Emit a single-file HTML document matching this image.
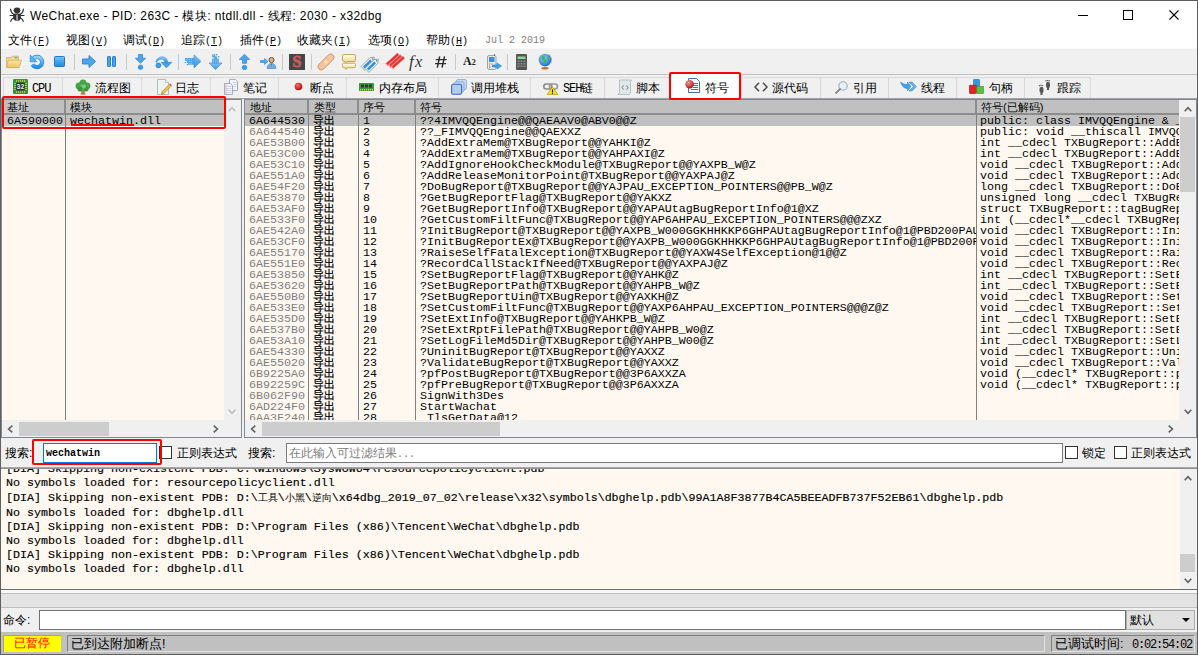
<!DOCTYPE html>
<html><head><meta charset="utf-8"><title>x32dbg</title>
<style>
*{margin:0;padding:0;box-sizing:border-box}
html,body{width:1198px;height:655px;overflow:hidden;background:#f0f0f0}
body{font-family:"Liberation Sans",sans-serif;font-size:12px;color:#000}
#win{position:absolute;left:0;top:0;width:1198px;height:655px;overflow:hidden;background:#f0f0f0}
.a{position:absolute}
.bx{position:absolute;box-sizing:border-box}
#rows{position:absolute;left:0;top:115px;width:1179px;height:305px;overflow:hidden}
.row{position:absolute;left:245px;width:934px;height:11px;white-space:nowrap}
.row.sel{background:#c0c0c0}
.row .c{position:absolute;top:1px;font-family:"Liberation Mono",monospace;font-size:11.667px;line-height:11px;color:#000}
.row .addr{color:#808080}
.row.sel .addr{color:#000}
.row .cj{font-family:"Liberation Sans",sans-serif;font-size:11px;top:0px;-webkit-text-stroke:0.25px #000}
.row .sym{width:556px;overflow:hidden}
.row .dec{width:199px;overflow:hidden}
#logtext{position:absolute;left:2px;top:469px;width:1177px;height:119px;overflow:hidden}
.logl{position:absolute;left:4px;font-family:"Liberation Mono",monospace;font-size:11.667px;line-height:14px;white-space:nowrap;-webkit-text-stroke:0.15px #000;}
.menu{position:absolute;top:33px;font-size:12px;line-height:14px;white-space:nowrap}
.tab{position:absolute;top:77px;height:21px;border:1px solid #d9d9d9;border-bottom:none;background:#f0f0f0}
.tabt{position:absolute;top:81px;font-size:12px;line-height:14px;white-space:nowrap}
.sep{position:absolute;top:54px;width:1px;height:16px;background:#c8c8c8}
.hdr{position:absolute;top:100px;height:15px;background:#c0c0c0;border-bottom:2px solid #8c8c8c;border-right:2px solid #8c8c8c}
.hdrt{position:absolute;top:101px;font-size:11px;line-height:13px;white-space:nowrap}
.lcj{font-family:'Liberation Sans',sans-serif;font-size:10px;-webkit-text-stroke:0;letter-spacing:0}
.mm{font-family:'Liberation Mono',monospace;font-size:10px}

</style></head><body>
<div id="win">
<!-- window frame -->
<div class="bx" style="left:0;top:0;width:1198px;height:49px;background:#fff"></div>
<div class="bx" style="left:0;top:48px;width:1198px;height:1px;background:#f8f8f8"></div>
<div class="bx" style="left:0;top:74px;width:1198px;height:1px;background:#c2c2c2"></div>
<!-- title -->
<div class="a" style="left:30px;top:9px;font-size:12px;line-height:14px;white-space:nowrap;letter-spacing:0.4px">WeChat.exe - PID: 263C - 模块: ntdll.dll - 线程: 2030 - x32dbg</div>
<!-- window buttons -->
<div class="bx" style="left:1078px;top:15px;width:10px;height:1px;background:#000"></div>
<div class="bx" style="left:1123px;top:10px;width:10px;height:10px;border:1px solid #000"></div>
<svg class="a" style="left:1169px;top:10px" width="10" height="10"><path d="M0.5 0.5L9.5 9.5M9.5 0.5L0.5 9.5" stroke="#000" stroke-width="1.1"/></svg>
<!-- menu -->
<div class="menu" style="left:8px">文件<span class="mm">(<u>F</u>)</span></div>
<div class="menu" style="left:66px">视图<span class="mm">(<u>V</u>)</span></div>
<div class="menu" style="left:123px">调试<span class="mm">(<u>D</u>)</span></div>
<div class="menu" style="left:181px">追踪<span class="mm">(<u>T</u>)</span></div>
<div class="menu" style="left:240px">插件<span class="mm">(<u>P</u>)</span></div>
<div class="menu" style="left:297px">收藏夹<span class="mm">(<u>I</u>)</span></div>
<div class="menu" style="left:368px">选项<span class="mm">(<u>O</u>)</span></div>
<div class="menu" style="left:426px">帮助<span class="mm">(<u>H</u>)</span></div>
<div class="menu" style="left:485px;top:34px;color:#808080;font-family:'Liberation Mono',monospace;font-size:10px">Jul 2 2019</div>
<!-- toolbar separators -->
<div class="sep" style="left:74px"></div>
<div class="sep" style="left:126px"></div>
<div class="sep" style="left:178px"></div>
<div class="sep" style="left:230px"></div>
<div class="sep" style="left:282px"></div>
<div class="sep" style="left:311px"></div>
<div class="sep" style="left:455px"></div>
<div class="sep" style="left:507px"></div>
<!-- tabs -->
<div class="tab" style="left:3px;width:60px"></div>
<div class="tab" style="left:62px;width:80px"></div>
<div class="tab" style="left:141px;width:70px"></div>
<div class="tab" style="left:210px;width:69px"></div>
<div class="tab" style="left:278px;width:69px"></div>
<div class="tab" style="left:346px;width:93px"></div>
<div class="tab" style="left:438px;width:93px"></div>
<div class="tab" style="left:530px;width:75px"></div>
<div class="tab" style="left:604px;width:66px"></div>
<div class="tab" style="left:741px;width:80px"></div>
<div class="tab" style="left:820px;width:69px"></div>
<div class="tab" style="left:888px;width:69px"></div>
<div class="tab" style="left:956px;width:69px"></div>
<div class="tab" style="left:1024px;width:67px"></div>
<div class="bx" style="left:671px;top:74px;width:69px;height:25px;background:#fff"></div>
<div class="bx" style="left:0;top:98px;width:1198px;height:1px;background:#a0a0a0"></div>
<div class="tabt" style="left:32px;top:82px;font-family:'Liberation Mono',monospace;font-size:12px;letter-spacing:-1.1px">CPU</div>
<div class="tabt" style="left:95px">流程图</div>
<div class="tabt" style="left:175px">日志</div>
<div class="tabt" style="left:243px">笔记</div>
<div class="tabt" style="left:310px">断点</div>
<div class="tabt" style="left:379px">内存布局</div>
<div class="tabt" style="left:471px">调用堆栈</div>
<div class="tabt" style="left:563px"><span style="font-family:'Liberation Mono',monospace;font-size:12px;letter-spacing:-1.1px">SEH</span>链</div>
<div class="tabt" style="left:636px">脚本</div>
<div class="tabt" style="left:705px">符号</div>
<div class="tabt" style="left:772px">源代码</div>
<div class="tabt" style="left:853px">引用</div>
<div class="tabt" style="left:921px">线程</div>
<div class="tabt" style="left:989px">句柄</div>
<div class="tabt" style="left:1057px">跟踪</div>

<!-- left panel -->
<div class="bx" style="left:1px;top:99px;width:241px;height:339px;border:1px solid #828790;background:#f0f0f0"></div>
<div class="bx" style="left:2px;top:100px;width:1px;height:320px;background:#fffff8"></div>
<div class="bx" style="left:3px;top:100px;width:221px;height:320px;background:#fff8f0"></div>
<div class="hdr" style="left:3px;width:63px"></div>
<div class="hdr" style="left:66px;width:158px;border-right:none"></div>
<div class="hdrt" style="left:7px">基址</div>
<div class="hdrt" style="left:70px">模块</div>
<div class="bx" style="left:3px;top:115px;width:221px;height:11px;background:#c0c0c0"></div>
<div class="bx" style="left:65px;top:114px;width:1px;height:306px;background:#808080;z-index:1"></div>
<div class="a" style="left:7px;top:116px;font-family:'Liberation Mono',monospace;font-size:11.667px;line-height:11px">6A590000</div>
<div class="a" style="left:70px;top:116px;font-family:'Liberation Mono',monospace;font-size:11.667px;line-height:11px">wechatwin.dll</div>
<div class="bx" style="left:71px;top:124px;width:63px;height:2px;background:#ff0000;z-index:1"></div>
<!-- right panel -->
<div class="bx" style="left:244px;top:99px;width:953px;height:339px;border:1px solid #828790;background:#f0f0f0"></div>
<div class="bx" style="left:245px;top:100px;width:934px;height:320px;background:#fff8f0"></div>
<div class="hdr" style="left:245px;width:64px"></div>
<div class="hdr" style="left:309px;width:50px"></div>
<div class="hdr" style="left:359px;width:57px"></div>
<div class="hdr" style="left:416px;width:561px"></div>
<div class="hdr" style="left:977px;width:202px;border-right:none"></div>
<div class="hdrt" style="left:250px">地址</div>
<div class="hdrt" style="left:314px">类型</div>
<div class="hdrt" style="left:363px">序号</div>
<div class="hdrt" style="left:420px">符号</div>
<div class="hdrt" style="left:981px">符号(已解码)</div>
<div class="bx" style="left:308px;top:114px;width:1px;height:306px;background:#808080;z-index:1"></div>
<div class="bx" style="left:358px;top:114px;width:1px;height:306px;background:#808080;z-index:1"></div>
<div class="bx" style="left:415px;top:114px;width:1px;height:306px;background:#808080;z-index:1"></div>
<div class="bx" style="left:976px;top:114px;width:1px;height:306px;background:#808080;z-index:1"></div>
<!-- right vscroll thumb -->
<div class="bx" style="left:1180px;top:117px;width:15px;height:75px;background:#cdcdcd"></div>
<!-- h scroll thumbs -->
<div class="bx" style="left:19px;top:422px;width:90px;height:14px;background:#cdcdcd"></div>
<div class="bx" style="left:262px;top:422px;width:238px;height:14px;background:#cdcdcd"></div>

<!-- search bar -->
<div class="bx" style="left:0;top:438px;width:1198px;height:29px;background:#f0f0f0"></div>
<div class="a" style="left:5px;top:446px;font-size:12px;line-height:14px">搜索:</div>
<div class="bx" style="left:43px;top:443px;width:114px;height:20px;border:1px solid #0078d7;background:#fff"></div>
<div class="a" style="left:46px;top:448px;font-family:'Liberation Mono',monospace;font-size:10px;line-height:12px;font-weight:bold">wechatwin</div>
<div class="bx" style="left:159px;top:446px;width:13px;height:13px;border:1px solid #333;background:#fff"></div>
<div class="a" style="left:177px;top:446px;font-size:12px;line-height:14px">正则表达式</div>
<div class="a" style="left:248px;top:446px;font-size:12px;line-height:14px">搜索:</div>
<div class="bx" style="left:286px;top:443px;width:777px;height:20px;border:1px solid #7a7a7a;background:#fff"></div>
<div class="a" style="left:289px;top:446px;font-size:12px;line-height:14px;color:#7c7c7c">在此输入可过滤结果<span style="font-family:'Liberation Mono',monospace;font-size:10px">...</span></div>
<div class="bx" style="left:1065px;top:446px;width:13px;height:13px;border:1px solid #333;background:#fff"></div>
<div class="a" style="left:1082px;top:446px;font-size:12px;line-height:14px">锁定</div>
<div class="bx" style="left:1114px;top:446px;width:13px;height:13px;border:1px solid #333;background:#fff"></div>
<div class="a" style="left:1131px;top:446px;font-size:12px;line-height:14px">正则表达式</div>

<!-- log -->
<div class="bx" style="left:0;top:467px;width:1198px;height:1px;background:#a8a8a8"></div>
<div class="bx" style="left:0;top:468px;width:1198px;height:1px;background:#909090"></div>
<div class="bx" style="left:1px;top:469px;width:1179px;height:120px;background:#fff8f0"></div>
<div class="bx" style="left:1180px;top:469px;width:16px;height:120px;background:#f0f0f0"></div>
<div class="bx" style="left:1180px;top:554px;width:15px;height:18px;background:#cdcdcd"></div>
<div class="bx" style="left:0;top:589px;width:1198px;height:1px;background:#6c6c6c"></div>
<div class="bx" style="left:0;top:590px;width:1198px;height:3px;background:#f8f8f8"></div>
<div class="bx" style="left:0;top:593px;width:1198px;height:1px;background:#c0c0c0"></div>
<div class="bx" style="left:0;top:594px;width:1198px;height:13px;background:#e3e3e3"></div>
<div class="bx" style="left:0;top:607px;width:1198px;height:1px;background:#c0c0c0"></div>
<!-- command bar -->
<div class="bx" style="left:0;top:608px;width:1198px;height:24px;background:#f0f0f0"></div>
<div class="a" style="left:3px;top:613px;font-size:12px;line-height:14px">命令:</div>
<div class="bx" style="left:39px;top:610px;width:1087px;height:20px;border:1px solid #707070;background:#fff"></div>
<div class="bx" style="left:1126px;top:610px;width:69px;height:20px;border:1px solid #adadad;background:#e1e1e1"></div>
<div class="a" style="left:1130px;top:613px;font-size:12px;line-height:14px">默认</div>
<svg class="a" style="left:1182px;top:618px" width="8" height="4"><path d="M0 0H8L4 4Z" fill="#000"/></svg>
<!-- status bar -->
<div class="bx" style="left:0;top:632px;width:1198px;height:23px;background:#c0c0c0"></div>
<div class="bx" style="left:3px;top:635px;width:58px;height:17px;background:#ffff00;border-top:1px solid #a8a860;border-left:1px solid #a8a860"></div>
<div class="a" style="left:14px;top:636px;font-size:12px;line-height:14px;color:#ff0000">已暂停</div>
<div class="bx" style="left:67px;top:635px;width:978px;height:17px;border-top:1px solid #808080;border-left:1px solid #808080;border-bottom:1px solid #e0e0e0;border-right:1px solid #e0e0e0"></div>
<div class="a" style="left:71px;top:637px;font-size:12.5px;line-height:14px">已到达附加断点!</div>
<div class="bx" style="left:1051px;top:635px;width:144px;height:17px;border-top:1px solid #808080;border-left:1px solid #808080;border-bottom:1px solid #e0e0e0;border-right:1px solid #e0e0e0"></div>
<div class="a" style="left:1055px;top:637px;font-size:12.5px;line-height:14px">已调试时间:</div>
<div class="a" style="left:1132px;top:638px;font-family:'Liberation Mono',monospace;font-size:12px;line-height:14px;letter-spacing:-1.2px">0:02:54:02</div>

<!-- red highlight boxes -->
<div class="bx" style="left:2px;top:96px;width:224px;height:33px;border:2px solid #ff0000;border-radius:2px;z-index:2"></div>
<div class="bx" style="left:32px;top:439px;width:130px;height:26px;border:2px solid #ff0000;border-radius:2px;z-index:2"></div>
<div class="bx" style="left:669px;top:72px;width:72px;height:28px;border:2px solid #ff0000;border-radius:2px;z-index:2"></div>

<!-- window border -->
<div class="bx" style="left:0;top:0;width:1198px;height:655px;border:1px solid #5f5f5f;z-index:3"></div>

<!-- bug icon -->
<svg class="a" style="left:9px;top:7px" width="16" height="15" viewBox="0 0 16 15">
<g stroke="#333" stroke-width="1.2" fill="none" stroke-linecap="round">
<path d="M1 8.5H15"/><path d="M1.6 2.2Q2 6 4.6 7.2"/><path d="M14.4 2.2Q14 6 11.4 7.2"/>
<path d="M4.6 11Q2.2 12 1.7 14.3"/><path d="M11.4 11Q13.8 12 14.3 14.3"/></g>
<ellipse cx="8" cy="3.3" rx="3.4" ry="2.9" fill="#333"/>
<path d="M4.2 7Q8 5.6 11.8 7L12 11Q11 14 8 14Q5 14 4 11Z" fill="#333"/>
<rect x="7.2" y="7.6" width="1.7" height="6" fill="#aaa"/>
</svg>
<!-- toolbar icons -->
<svg class="a" style="left:6px;top:55px" width="16" height="14" viewBox="0 0 16 14">
<defs><linearGradient id="gf" x1="0" y1="0" x2="0" y2="1"><stop offset="0" stop-color="#fbe7a6"/><stop offset="1" stop-color="#e8c46a"/></linearGradient></defs>
<path d="M0.5 2.5H5.5L6.5 1.2H12.5V12.5H0.5Z" fill="#f2d68a" stroke="#d4b060" stroke-width="0.8"/>
<rect x="8.5" y="2" width="3" height="1.2" fill="#4ab0d8"/>
<path d="M2.2 5.2H15.5L13.2 12.6H0.6Z" fill="url(#gf)" stroke="#d4b060" stroke-width="0.8"/>
</svg>
<svg class="a" style="left:30px;top:55px;overflow:visible" width="14" height="14" viewBox="0 0 14 14">
<defs><linearGradient id="grs" x1="0" y1="0" x2="0" y2="1"><stop offset="0" stop-color="#8ed2fb"/><stop offset="1" stop-color="#1e90ea"/></linearGradient></defs>
<path d="M3.2 3.6A5.1 5.1 0 1 1 2.6 9.6" fill="none" stroke="#2f84d6" stroke-width="4.2"/>
<path d="M3.2 3.6A5.1 5.1 0 1 1 2.6 9.6" fill="none" stroke="url(#grs)" stroke-width="3"/>
<path d="M0.2 0L0.2 6.8L6.8 6.8Z" fill="#5ab4f4" stroke="#2f84d6" stroke-width="0.7"/>
</svg>
<svg class="a" style="left:54px;top:56px" width="11" height="11" viewBox="0 0 11 11">
<defs><linearGradient id="gs" x1="0" y1="0" x2="0" y2="1"><stop offset="0" stop-color="#79c6fa"/><stop offset="0.5" stop-color="#3fa5ef"/><stop offset="1" stop-color="#1d8ee8"/></linearGradient></defs>
<rect x="0.5" y="0.5" width="10" height="10" rx="0.8" fill="url(#gs)" stroke="#2a74c4"/>
</svg>
<svg class="a" style="left:82px;top:55px" width="14" height="13" viewBox="0 0 14 13">
<path d="M0.5 4H7V0.5L13.5 6.5L7 12.5V9H0.5Z" fill="#4aa7ee" stroke="#2f7fcf" stroke-width="0.9"/>
</svg>
<svg class="a" style="left:107px;top:56px" width="9" height="11" viewBox="0 0 9 11">
<rect x="0.5" y="0.5" width="3" height="10" rx="0.6" fill="#3fa5ef" stroke="#2a74c4" stroke-width="0.9"/>
<rect x="5.5" y="0.5" width="3" height="10" rx="0.6" fill="#3fa5ef" stroke="#2a74c4" stroke-width="0.9"/>
</svg>
<svg class="a" style="left:135px;top:54px" width="11" height="16" viewBox="0 0 11 16">
<path d="M3.5 0.3H7.5V4.2H10.7L5.5 9.3L0.3 4.2H3.5Z" fill="#49a6ee" stroke="#2f7fcf" stroke-width="0.7"/>
<circle cx="5.5" cy="13.2" r="2.3" fill="#33a0f0" stroke="#2f7fcf" stroke-width="0.6"/>
</svg>
<svg class="a" style="left:155px;top:56px;overflow:visible" width="17" height="13" viewBox="0 0 17 13">
<path d="M0.8 6C1.5 2.5 4.5 0.6 7.5 0.8C10.8 1 12.6 3.5 12.8 6.6L9.8 6.6C9.5 4.5 8.5 3.2 6.8 3.2C4.5 3.2 2.5 4.5 1.6 6.2Z" fill="url(#grs)" stroke="#3a8ad8" stroke-width="0.5"/>
<path d="M6.2 6.4L16.8 6.4L11.4 11.8Z" fill="#3ea6f0" stroke="#2f7fcf" stroke-width="0.7"/>
<circle cx="3.4" cy="9.4" r="2.4" fill="#33a2f2" stroke="#2a78c8" stroke-width="0.8"/>
</svg>
<svg class="a" style="left:184px;top:54px" width="17" height="15" viewBox="0 0 17 15">
<defs><linearGradient id="gt" x1="0" y1="0" x2="0" y2="1"><stop offset="0" stop-color="#7ccaf8"/><stop offset="1" stop-color="#2a90e4"/></linearGradient></defs>
<path d="M10 0.9L10 13.8L16.9 7.4Z" fill="url(#gt)" stroke="#3a80d0" stroke-width="0.6"/>
<rect x="4" y="4" width="6.4" height="6.7" fill="#4aa4ec"/>
<rect x="1" y="4" width="2.8" height="2.8" fill="#4aa4ec"/><rect x="2.8" y="6.3" width="2.5" height="2.5" fill="#4aa4ec"/>
<g fill="#8fd0ff"><circle cx="5.3" cy="5.2" r="0.6"/><circle cx="7.3" cy="5.2" r="0.6"/><circle cx="5.3" cy="7.4" r="0.6"/><circle cx="7.3" cy="7.4" r="0.6"/><circle cx="5.3" cy="9.4" r="0.6"/><circle cx="7.3" cy="9.4" r="0.6"/><circle cx="2.3" cy="5.3" r="0.6"/></g>
<circle cx="1.4" cy="8.6" r="0.7" fill="#3a88d8"/><circle cx="3.4" cy="10.6" r="0.7" fill="#3a88d8"/>
</svg>
<svg class="a" style="left:208px;top:54px" width="15" height="16" viewBox="0 0 15 16">
<path d="M1 9L14 9L7.5 15.6Z" fill="url(#gt)" stroke="#3a80d0" stroke-width="0.6"/>
<rect x="4.2" y="4.5" width="6.6" height="4.8" fill="#4aa4ec"/>
<rect x="4.2" y="0.3" width="3" height="3" fill="#4aa4ec"/><rect x="6.3" y="2.3" width="2.6" height="2.6" fill="#4aa4ec"/>
<g fill="#8fd0ff"><circle cx="5.6" cy="5.8" r="0.6"/><circle cx="7.6" cy="5.8" r="0.6"/><circle cx="9.6" cy="5.8" r="0.6"/><circle cx="5.6" cy="7.8" r="0.6"/><circle cx="7.6" cy="7.8" r="0.6"/><circle cx="9.6" cy="7.8" r="0.6"/><circle cx="5.6" cy="1.7" r="0.6"/></g>
<circle cx="8.7" cy="0.7" r="0.7" fill="#3a88d8"/><circle cx="10.7" cy="2.7" r="0.7" fill="#3a88d8"/>
</svg>
<svg class="a" style="left:239px;top:54px" width="11" height="16" viewBox="0 0 11 16">
<path d="M3.5 9.3H7.5V5.4H10.7L5.5 0.3L0.3 5.4H3.5Z" fill="#49a6ee" stroke="#2f7fcf" stroke-width="0.7"/>
<circle cx="5.5" cy="13.5" r="2.3" fill="#33a0f0" stroke="#2f7fcf" stroke-width="0.6"/>
</svg>
<svg class="a" style="left:260px;top:57px" width="17" height="12" viewBox="0 0 17 12">
<path d="M0.5 3.5H4.5V1.5L8 4.5L4.5 7.5V5.5H0.5Z" fill="#4aa7ee" stroke="#2f7fcf" stroke-width="0.6"/>
<circle cx="11.5" cy="3" r="2.6" fill="#d9b08a" stroke="#5a3a20" stroke-width="0.8"/>
<path d="M7 11.5Q7.5 6.5 11.5 6.5Q15.5 6.5 16 11.5Z" fill="#6ab0e8" stroke="#3a7cc0" stroke-width="0.6"/>
<path d="M11 6.6L11.5 10L12 6.6Z" fill="#a06030"/>
</svg>
<div class="bx" style="left:289px;top:54px;width:16px;height:16px;background:#454545"></div>
<div class="a" style="left:289px;top:54px;width:16px;text-align:center;font-family:'Liberation Serif',serif;font-weight:bold;font-size:16px;line-height:16px;color:#c65c5c;-webkit-text-stroke:0.8px #c65c5c">S</div>
<svg class="a" style="left:318px;top:54px;overflow:visible" width="16" height="16" viewBox="0 0 16 16">
<g transform="rotate(-45 8 8)"><rect x="-1.9" y="4.7" width="19.8" height="6.6" rx="3.3" fill="#f2c4a0" stroke="#cf9168" stroke-width="0.9"/><rect x="6.2" y="6.1" width="3.6" height="3.8" fill="#f9dba6"/></g>
</svg>
<svg class="a" style="left:342px;top:54px" width="14" height="16" viewBox="0 0 14 16">
<defs><linearGradient id="gc" x1="0" y1="0" x2="0" y2="1"><stop offset="0" stop-color="#fffbe8"/><stop offset="0.45" stop-color="#f4f0c0"/><stop offset="1" stop-color="#e2d880"/></linearGradient></defs>
<path d="M1.8 0.5H12.2Q13.5 0.5 13.5 1.8V6.2Q13.5 7.5 12.2 7.5H5L4 8.8L3.4 7.5H1.8Q0.5 7.5 0.5 6.2V1.8Q0.5 0.5 1.8 0.5Z" fill="url(#gc)" stroke="#c49a58" stroke-width="0.9"/>
<path d="M1.8 9.2H12.2Q13.5 9.2 13.5 10.5V12.4Q13.5 13.7 12.2 13.7H5L4 15.5L3.4 13.7H1.8Q0.5 13.7 0.5 12.4V10.5Q0.5 9.2 1.8 9.2Z" fill="url(#gc)" stroke="#c49a58" stroke-width="0.9"/>
</svg>
<svg class="a" style="left:363px;top:54px;overflow:visible" width="18" height="16" viewBox="0 0 18 16">
<g transform="rotate(-45 7 8)"><path d="M-2.5 4.9H10L13.5 7.6L10 10.3H-2.5Z" fill="#f8f8f8" stroke="#7c9ca2" stroke-width="0.8"/><rect x="-1.4" y="6.3" width="10.4" height="2.6" fill="#2a8fe0"/><circle cx="11" cy="7.6" r="0.8" fill="#6a8a90"/></g>
<g transform="translate(4 2) rotate(-45 7 8)"><path d="M-2.5 4.9H10L13.5 7.6L10 10.3H-2.5Z" fill="#f8f8f8" stroke="#7c9ca2" stroke-width="0.8"/><rect x="-1.4" y="6.3" width="10.4" height="2.6" fill="#2a8fe0"/><circle cx="11" cy="7.6" r="0.8" fill="#6a8a90"/></g>
</svg>
<svg class="a" style="left:387px;top:54px;overflow:visible" width="17" height="15" viewBox="0 0 17 15">
<g transform="rotate(-42 8 7.5)" stroke="#f6a0a0" stroke-width="0.5"><path d="M-1 2.8H15.5V5.6H-1L0.4 4.2Z" fill="#e23434"/><path d="M0 5.8H16.5V8.6H0L1.4 7.2Z" fill="#e83c3c"/><path d="M1 8.8H17.5V11.6H1L2.4 10.2Z" fill="#e23434"/></g>
</svg>
<div class="a" style="left:409px;top:53px;font-family:'Liberation Serif',serif;font-style:italic;font-size:17px;line-height:18px;color:#333">f</div><div class="a" style="left:415px;top:53px;font-family:'Liberation Serif',serif;font-style:italic;font-size:16px;line-height:18px;color:#333">x</div>
<svg class="a" style="left:435px;top:56px" width="12" height="12" viewBox="0 0 12 12"><g stroke="#303030" stroke-linecap="round"><path d="M4.6 0.9L2.4 11.1M9.4 0.9L7.2 11.1" stroke-width="1.5"/><path d="M1.2 3.6H11.2M0.6 7.6H10.6" stroke-width="1.3"/></g></svg>
<div class="a" style="left:463px;top:55px;font-family:'Liberation Serif',serif;font-weight:bold;font-size:12px;line-height:13px;color:#202020">A<span style="font-size:8px">2</span></div>
<svg class="a" style="left:487px;top:54px" width="15" height="16" viewBox="0 0 15 16">
<rect x="0.5" y="1.5" width="8.5" height="14" rx="1.5" fill="#e8e8e8" stroke="#909090" stroke-width="0.8"/>
<rect x="2" y="3" width="5.5" height="5" fill="#3c8fd8"/>
<line x1="7.5" y1="0" x2="7.5" y2="2" stroke="#707070"/>
<g fill="#909090"><rect x="2" y="9.5" width="1.4" height="1"/><rect x="4.2" y="9.5" width="1.4" height="1"/><rect x="2" y="11.5" width="1.4" height="1"/><rect x="2" y="13.2" width="1.4" height="1"/></g>
<path d="M5.5 11H10V9L14.5 12L10 15V13H5.5Z" fill="#3aa6ee" stroke="#2a7cc8" stroke-width="0.6"/>
</svg>
<svg class="a" style="left:516px;top:54px" width="11" height="16" viewBox="0 0 11 16">
<rect x="0" y="0" width="11" height="16" rx="1" fill="#555"/>
<rect x="1.5" y="2.5" width="8" height="2.5" fill="#8fd88f"/>
<g fill="#8c8c8c"><rect x="1.5" y="6.5" width="2" height="1.5"/><rect x="4.5" y="6.5" width="2" height="1.5"/><rect x="7.5" y="6.5" width="2" height="1.5"/><rect x="1.5" y="9" width="2" height="1.5"/><rect x="4.5" y="9" width="2" height="1.5"/><rect x="7.5" y="9" width="2" height="1.5"/><rect x="1.5" y="11.5" width="2" height="1.5"/><rect x="4.5" y="11.5" width="2" height="1.5"/><rect x="7.5" y="11.5" width="2" height="1.5"/></g>
</svg>
<svg class="a" style="left:538px;top:53px" width="15" height="17" viewBox="0 0 15 17">
<defs><radialGradient id="gg" cx="0.4" cy="0.35" r="0.7"><stop offset="0" stop-color="#8fd0ff"/><stop offset="1" stop-color="#1a6ac8"/></radialGradient></defs>
<path d="M11 1Q15 5 13 10.5" fill="none" stroke="#b0b0b0" stroke-width="0.9"/>
<circle cx="7" cy="7" r="6.3" fill="url(#gg)"/>
<path d="M4 3Q6 2 7 4Q6 6 8 7Q9 9 7.5 10.5Q6 9 5 7Q3 6 4 3Z" fill="#3cba4a"/>
<path d="M9.5 3.5Q11.5 4 12 6Q10.5 6.5 9.5 5Z" fill="#3cba4a"/>
<ellipse cx="7" cy="15.2" rx="3.6" ry="1.3" fill="#c0703a"/>
<line x1="7" y1="13.3" x2="7" y2="14.2" stroke="#999"/>
</svg>
<!-- tab icons -->
<svg class="a" style="left:13px;top:79px" width="15" height="15" viewBox="0 0 15 15">
<rect x="0" y="0" width="15" height="15" rx="1.2" fill="#3e8e3e"/>
<g fill="#e6c84a"><rect x="3" y="1.2" width="1" height="1.6"/><rect x="5" y="1.2" width="1" height="1.6"/><rect x="7" y="1.2" width="1" height="1.6"/><rect x="9" y="1.2" width="1" height="1.6"/><rect x="11" y="1.2" width="1" height="1.6"/>
<rect x="3" y="12.2" width="1" height="1.6"/><rect x="5" y="12.2" width="1" height="1.6"/><rect x="7" y="12.2" width="1" height="1.6"/><rect x="9" y="12.2" width="1" height="1.6"/><rect x="11" y="12.2" width="1" height="1.6"/>
<rect x="1.2" y="4" width="1.6" height="1"/><rect x="1.2" y="6" width="1.6" height="1"/><rect x="1.2" y="8" width="1.6" height="1"/><rect x="1.2" y="10" width="1.6" height="1"/>
<rect x="12.2" y="4" width="1.6" height="1"/><rect x="12.2" y="6" width="1.6" height="1"/><rect x="12.2" y="8" width="1.6" height="1"/><rect x="12.2" y="10" width="1.6" height="1"/></g>
<rect x="3.2" y="3.4" width="8.6" height="8.2" rx="0.8" fill="#333"/>
<text x="7.5" y="10" text-anchor="middle" font-family="Liberation Mono" font-weight="bold" font-size="6.5" fill="#e8e8e8">32</text>
</svg>
<svg class="a" style="left:75px;top:79px" width="16" height="16" viewBox="0 0 16 16">
<path d="M6.5 10.5L6 15H10L9.5 10.5Z" fill="#b87a40"/>
<ellipse cx="8" cy="15" rx="3" ry="0.8" fill="#c08050"/>
<circle cx="8" cy="4" r="3.6" fill="#4aa24a"/><circle cx="4" cy="7" r="3.4" fill="#48a048"/><circle cx="12" cy="7" r="3.4" fill="#48a048"/><circle cx="8" cy="8.5" r="3.6" fill="#5cb85c"/><circle cx="5" cy="10" r="2.5" fill="#3e963e"/><circle cx="11" cy="10" r="2.5" fill="#3e963e"/>
<circle cx="9" cy="7.5" r="2" fill="#78c878"/>
</svg>
<svg class="a" style="left:157px;top:79px" width="15" height="16" viewBox="0 0 15 16">
<path d="M0.5 0.5H8.5L11.5 3.5V15.5H0.5Z" fill="#eef4f4" stroke="#a8b4b4" stroke-width="0.9"/>
<path d="M8.5 0.5V3.5H11.5" fill="#fff" stroke="#a8b4b4" stroke-width="0.8"/>
<path d="M4.5 15.3L5.2 12.5L12.4 5.3L14.2 7.1L7 14.3Z" fill="#f0c840" stroke="#8a7020" stroke-width="0.6"/>
<path d="M12.4 5.3L13.3 4.4L15 6.2L14.2 7.1Z" fill="#e05050"/>
</svg>
<svg class="a" style="left:224px;top:79px" width="14" height="16" viewBox="0 0 14 16">
<path d="M5.5 0.5H11.5L13.5 2.5V11.5H5.5Z" fill="#f4f6ff" stroke="#909aa8" stroke-width="0.8"/>
<path d="M0.5 4.5H6.5L8.5 6.5V15.5H0.5Z" fill="#f4f6ff" stroke="#909aa8" stroke-width="0.8"/>
<g stroke="#a8b8e8" stroke-width="0.6"><line x1="1.5" y1="7.5" x2="7.5" y2="7.5"/><line x1="1.5" y1="9.5" x2="7.5" y2="9.5"/><line x1="1.5" y1="11.5" x2="7.5" y2="11.5"/><line x1="1.5" y1="13.5" x2="7.5" y2="13.5"/><line x1="8.5" y1="3.5" x2="12.5" y2="3.5"/><line x1="9.5" y1="5.5" x2="12.5" y2="5.5"/><line x1="9.5" y1="7.5" x2="12.5" y2="7.5"/></g>
<line x1="2" y1="5" x2="2" y2="15" stroke="#f08080" stroke-width="0.5"/>
</svg>
<svg class="a" style="left:294px;top:82px" width="9" height="9" viewBox="0 0 9 9">
<defs><radialGradient id="gr" cx="0.4" cy="0.35" r="0.65"><stop offset="0" stop-color="#ff7070"/><stop offset="1" stop-color="#b00808"/></radialGradient></defs>
<circle cx="4.5" cy="4.5" r="3.8" fill="url(#gr)"/>
</svg>
<svg class="a" style="left:359px;top:83px" width="15" height="8" viewBox="0 0 15 8">
<rect x="0" y="0" width="15" height="8" rx="0.6" fill="#3a9a3a"/>
<rect x="2" y="1.5" width="3" height="3" fill="#333"/><rect x="6" y="1.5" width="3" height="3" fill="#333"/><rect x="10" y="1.5" width="3" height="3" fill="#333"/>
<g fill="#e8d050"><rect x="1" y="6" width="1" height="1.5"/><rect x="3" y="6" width="1" height="1.5"/><rect x="5" y="6" width="1" height="1.5"/><rect x="7" y="6" width="1" height="1.5"/><rect x="9" y="6" width="1" height="1.5"/><rect x="11" y="6" width="1" height="1.5"/><rect x="13" y="6" width="1" height="1.5"/></g>
</svg>
<svg class="a" style="left:451px;top:79px" width="16" height="16" viewBox="0 0 16 16">
<rect x="5.5" y="0.5" width="10" height="10" rx="1.5" fill="#c8dcf4" stroke="#88a8d8" stroke-width="0.8"/>
<rect x="3" y="2.8" width="10" height="10" rx="1.5" fill="#c0d6f2" stroke="#7a9cd6" stroke-width="0.8"/>
<rect x="0.6" y="5.2" width="10" height="10" rx="1.5" fill="#b4ccee" stroke="#3a6ad0" stroke-width="1.1"/>
</svg>
<svg class="a" style="left:543px;top:83px" width="16" height="12" viewBox="0 0 16 12">
<rect x="0.8" y="1" width="8" height="5" rx="2.5" fill="none" stroke="#8a8a8a" stroke-width="1.6"/>
<rect x="6.5" y="1" width="8" height="5" rx="2.5" fill="none" stroke="#9a9a9a" stroke-width="1.6"/>
<path d="M9.5 4L15 11.5H4Z" fill="#f4d820" stroke="#b09000" stroke-width="0.6"/>
<rect x="9" y="6.5" width="1" height="3" fill="#222"/><rect x="9" y="10" width="1" height="1" fill="#222"/>
</svg>
<svg class="a" style="left:617px;top:79px" width="16" height="16" viewBox="0 0 16 16">
<path d="M2.5 1H14.5Q13.5 2 13.5 3.5V13.5Q13.5 15 12 15.5H0.8Q2.5 14.5 2.5 13Z" fill="#dde9e9" stroke="#a8b8b8" stroke-width="0.8"/>
<path d="M6.5 6.5L5 8.5L6.5 10.5M9.5 6.5L11 8.5L9.5 10.5" fill="none" stroke="#666" stroke-width="0.9"/>
</svg>
<svg class="a" style="left:685px;top:78px" width="15" height="15" viewBox="0 0 15 15">
<defs><radialGradient id="gr2" cx="0.38" cy="0.32" r="0.7"><stop offset="0" stop-color="#ff9a9a"/><stop offset="1" stop-color="#b81010"/></radialGradient></defs>
<path d="M3.5 0.5H11.5L14.5 3.5V14.5H3.5Z" fill="#f4f8ff" stroke="#3c5aa0" stroke-width="0.9"/>
<g stroke="#3060d0" stroke-width="0.9"><line x1="8" y1="5.5" x2="13" y2="5.5"/><line x1="8" y1="7.5" x2="13" y2="7.5"/><line x1="8" y1="9.5" x2="13" y2="9.5"/><line x1="6" y1="11.5" x2="13" y2="11.5"/></g>
<circle cx="4.6" cy="6.2" r="4.2" fill="url(#gr2)"/>
</svg>
<svg class="a" style="left:754px;top:82px" width="14" height="10" viewBox="0 0 14 10">
<path d="M5 0.7L1 5L5 9.3M9 0.7L13 5L9 9.3" fill="none" stroke="#4a4a4a" stroke-width="1.5"/>
</svg>
<svg class="a" style="left:835px;top:81px" width="13" height="13" viewBox="0 0 13 13">
<circle cx="8" cy="5" r="4.2" fill="#e6f0f8" stroke="#9aaab8" stroke-width="1.1"/>
<line x1="5" y1="8" x2="1" y2="12" stroke="#888" stroke-width="1.8" stroke-linecap="round"/>
</svg>
<svg class="a" style="left:900px;top:81px" width="17" height="11" viewBox="0 0 17 11">
<path d="M0.5 1Q4 4 7.5 3.5V1L11 5.5L7.5 10V7.5Q3 8 0.5 1Z" fill="#3aa2ee" stroke="#2a7cc8" stroke-width="0.5"/>
<path d="M9 1L12 1L16.5 5.5L12 10H9L13.5 5.5Z" fill="#5ab4f4" stroke="#2a7cc8" stroke-width="0.5"/>
</svg>
<svg class="a" style="left:969px;top:79px" width="15" height="15" viewBox="0 0 15 15">
<rect x="4.5" y="0.3" width="6" height="7" rx="0.8" fill="#2e9ae6" stroke="#1a6ab0" stroke-width="0.6"/>
<rect x="0.3" y="6.3" width="7.2" height="8.2" rx="0.8" fill="#e02424" stroke="#a01010" stroke-width="0.6"/>
<rect x="7.7" y="7.3" width="7" height="7.2" rx="0.8" fill="#5cc040" stroke="#3a8a20" stroke-width="0.6"/>
</svg>
<svg class="a" style="left:1038px;top:80px" width="14" height="15" viewBox="0 0 14 15">
<ellipse cx="3.5" cy="10" rx="2" ry="3.2" fill="#555"/><ellipse cx="10" cy="5" rx="2" ry="3.2" fill="#555"/>
<g fill="#555"><circle cx="1.5" cy="5.7" r="0.7"/><circle cx="3" cy="5.2" r="0.7"/><circle cx="4.6" cy="5.6" r="0.7"/><circle cx="8" cy="0.8" r="0.7"/><circle cx="9.6" cy="0.4" r="0.7"/><circle cx="11.2" cy="0.8" r="0.7"/></g>
<rect x="2.5" y="13" width="2" height="2" fill="#555"/><rect x="9" y="8" width="2" height="2" fill="#555"/>
</svg>
<!-- scrollbar arrows -->
<svg class="a" style="left:1184px;top:106px" width="8" height="6" viewBox="0 0 8 6"><path d="M0.7 5.3L4 1.6L7.3 5.3" fill="none" stroke="#606060" stroke-width="1.6"/></svg>
<svg class="a" style="left:1184px;top:409px" width="8" height="6" viewBox="0 0 8 6"><path d="M0.7 0.7L4 4.4L7.3 0.7" fill="none" stroke="#606060" stroke-width="1.6"/></svg>
<svg class="a" style="left:228px;top:106px" width="8" height="6" viewBox="0 0 8 6"><path d="M0.7 5.3L4 1.6L7.3 5.3" fill="none" stroke="#c0c0c0" stroke-width="1.6"/></svg>
<svg class="a" style="left:228px;top:409px" width="8" height="6" viewBox="0 0 8 6"><path d="M0.7 0.7L4 4.4L7.3 0.7" fill="none" stroke="#c0c0c0" stroke-width="1.6"/></svg>
<svg class="a" style="left:7px;top:425px" width="6" height="8" viewBox="0 0 6 8"><path d="M5.3 0.7L1.6 4L5.3 7.3" fill="none" stroke="#606060" stroke-width="1.6"/></svg>
<svg class="a" style="left:213px;top:425px" width="6" height="8" viewBox="0 0 6 8"><path d="M0.7 0.7L4.4 4L0.7 7.3" fill="none" stroke="#606060" stroke-width="1.6"/></svg>
<svg class="a" style="left:250px;top:425px" width="6" height="8" viewBox="0 0 6 8"><path d="M5.3 0.7L1.6 4L5.3 7.3" fill="none" stroke="#606060" stroke-width="1.6"/></svg>
<svg class="a" style="left:1168px;top:425px" width="6" height="8" viewBox="0 0 6 8"><path d="M0.7 0.7L4.4 4L0.7 7.3" fill="none" stroke="#606060" stroke-width="1.6"/></svg>
<svg class="a" style="left:1184px;top:475px" width="8" height="6" viewBox="0 0 8 6"><path d="M0.7 5.3L4 1.6L7.3 5.3" fill="none" stroke="#606060" stroke-width="1.6"/></svg>
<svg class="a" style="left:1184px;top:578px" width="8" height="6" viewBox="0 0 8 6"><path d="M0.7 0.7L4 4.4L7.3 0.7" fill="none" stroke="#606060" stroke-width="1.6"/></svg>

<div id="rows">
<div class="row sel" style="top:0px"><span class="c addr" style="left:4px">6A644530</span><span class="c cj" style="left:68px">导出</span><span class="c" style="left:118px">1</span><span class="c sym" style="left:175px">??4IMVQQEngine@@QAEAAV0@ABV0@@Z</span><span class="c dec" style="left:735px">public: class IMVQQEngine &amp; __thiscall IMVQQEngine::operator=(class IMVQQEngine const &amp;)</span></div>
<div class="row" style="top:11px"><span class="c addr" style="left:4px">6A644540</span><span class="c cj" style="left:68px">导出</span><span class="c" style="left:118px">2</span><span class="c sym" style="left:175px">??_FIMVQQEngine@@QAEXXZ</span><span class="c dec" style="left:735px">public: void __thiscall IMVQQEngine::`default constructor closure'(void)</span></div>
<div class="row" style="top:22px"><span class="c addr" style="left:4px">6AE53B00</span><span class="c cj" style="left:68px">导出</span><span class="c" style="left:118px">3</span><span class="c sym" style="left:175px">?AddExtraMem@TXBugReport@@YAHKI@Z</span><span class="c dec" style="left:735px">int __cdecl TXBugReport::AddExtraMem(unsigned long,unsigned int)</span></div>
<div class="row" style="top:33px"><span class="c addr" style="left:4px">6AE53C00</span><span class="c cj" style="left:68px">导出</span><span class="c" style="left:118px">4</span><span class="c sym" style="left:175px">?AddExtraMem@TXBugReport@@YAHPAXI@Z</span><span class="c dec" style="left:735px">int __cdecl TXBugReport::AddExtraMem(void *,unsigned int)</span></div>
<div class="row" style="top:44px"><span class="c addr" style="left:4px">6AE53C10</span><span class="c cj" style="left:68px">导出</span><span class="c" style="left:118px">5</span><span class="c sym" style="left:175px">?AddIgnoreHookCheckModule@TXBugReport@@YAXPB_W@Z</span><span class="c dec" style="left:735px">void __cdecl TXBugReport::AddIgnoreHookCheckModule(wchar_t const *)</span></div>
<div class="row" style="top:55px"><span class="c addr" style="left:4px">6AE551A0</span><span class="c cj" style="left:68px">导出</span><span class="c" style="left:118px">6</span><span class="c sym" style="left:175px">?AddReleaseMonitorPoint@TXBugReport@@YAXPAJ@Z</span><span class="c dec" style="left:735px">void __cdecl TXBugReport::AddReleaseMonitorPoint(long *)</span></div>
<div class="row" style="top:66px"><span class="c addr" style="left:4px">6AE54F20</span><span class="c cj" style="left:68px">导出</span><span class="c" style="left:118px">7</span><span class="c sym" style="left:175px">?DoBugReport@TXBugReport@@YAJPAU_EXCEPTION_POINTERS@@PB_W@Z</span><span class="c dec" style="left:735px">long __cdecl TXBugReport::DoBugReport(struct _EXCEPTION_POINTERS *,wchar_t const *)</span></div>
<div class="row" style="top:77px"><span class="c addr" style="left:4px">6AE53870</span><span class="c cj" style="left:68px">导出</span><span class="c" style="left:118px">8</span><span class="c sym" style="left:175px">?GetBugReportFlag@TXBugReport@@YAKXZ</span><span class="c dec" style="left:735px">unsigned long __cdecl TXBugReport::GetBugReportFlag(void)</span></div>
<div class="row" style="top:88px"><span class="c addr" style="left:4px">6AE53AF0</span><span class="c cj" style="left:68px">导出</span><span class="c" style="left:118px">9</span><span class="c sym" style="left:175px">?GetBugReportInfo@TXBugReport@@YAPAUtagBugReportInfo@1@XZ</span><span class="c dec" style="left:735px">struct TXBugReport::tagBugReportInfo * __cdecl TXBugReport::GetBugReportInfo(void)</span></div>
<div class="row" style="top:99px"><span class="c addr" style="left:4px">6AE533F0</span><span class="c cj" style="left:68px">导出</span><span class="c" style="left:118px">10</span><span class="c sym" style="left:175px">?GetCustomFiltFunc@TXBugReport@@YAP6AHPAU_EXCEPTION_POINTERS@@@ZXZ</span><span class="c dec" style="left:735px">int (__cdecl*__cdecl TXBugReport::GetCustomFiltFunc(void))(struct _EXCEPTION_POINTERS *)</span></div>
<div class="row" style="top:110px"><span class="c addr" style="left:4px">6AE542A0</span><span class="c cj" style="left:68px">导出</span><span class="c" style="left:118px">11</span><span class="c sym" style="left:175px">?InitBugReport@TXBugReport@@YAXPB_W000GGKHHKKP6GHPAUtagBugReportInfo@1@PBD200PAU_EXCEPTION_POINTERS@@@ZH@Z</span><span class="c dec" style="left:735px">void __cdecl TXBugReport::InitBugReport(wchar_t const *)</span></div>
<div class="row" style="top:121px"><span class="c addr" style="left:4px">6AE53CF0</span><span class="c cj" style="left:68px">导出</span><span class="c" style="left:118px">12</span><span class="c sym" style="left:175px">?InitBugReportEx@TXBugReport@@YAXPB_W000GGKHHKKP6GHPAUtagBugReportInfo@1@PBD200PAU_EXCEPTION_POINTERS@@@ZH@Z</span><span class="c dec" style="left:735px">void __cdecl TXBugReport::InitBugReportEx(wchar_t const *)</span></div>
<div class="row" style="top:132px"><span class="c addr" style="left:4px">6AE55170</span><span class="c cj" style="left:68px">导出</span><span class="c" style="left:118px">13</span><span class="c sym" style="left:175px">?RaiseSelfFatalException@TXBugReport@@YAXW4SelfException@1@@Z</span><span class="c dec" style="left:735px">void __cdecl TXBugReport::RaiseSelfFatalException(enum TXBugReport::SelfException)</span></div>
<div class="row" style="top:143px"><span class="c addr" style="left:4px">6AE551E0</span><span class="c cj" style="left:68px">导出</span><span class="c" style="left:118px">14</span><span class="c sym" style="left:175px">?RecordCallStackIfNeed@TXBugReport@@YAXPAJ@Z</span><span class="c dec" style="left:735px">void __cdecl TXBugReport::RecordCallStackIfNeed(long *)</span></div>
<div class="row" style="top:154px"><span class="c addr" style="left:4px">6AE53850</span><span class="c cj" style="left:68px">导出</span><span class="c" style="left:118px">15</span><span class="c sym" style="left:175px">?SetBugReportFlag@TXBugReport@@YAHK@Z</span><span class="c dec" style="left:735px">int __cdecl TXBugReport::SetBugReportFlag(unsigned long)</span></div>
<div class="row" style="top:165px"><span class="c addr" style="left:4px">6AE53620</span><span class="c cj" style="left:68px">导出</span><span class="c" style="left:118px">16</span><span class="c sym" style="left:175px">?SetBugReportPath@TXBugReport@@YAHPB_W@Z</span><span class="c dec" style="left:735px">int __cdecl TXBugReport::SetBugReportPath(wchar_t const *)</span></div>
<div class="row" style="top:176px"><span class="c addr" style="left:4px">6AE550B0</span><span class="c cj" style="left:68px">导出</span><span class="c" style="left:118px">17</span><span class="c sym" style="left:175px">?SetBugReportUin@TXBugReport@@YAXKH@Z</span><span class="c dec" style="left:735px">void __cdecl TXBugReport::SetBugReportUin(unsigned long,int)</span></div>
<div class="row" style="top:187px"><span class="c addr" style="left:4px">6AE533E0</span><span class="c cj" style="left:68px">导出</span><span class="c" style="left:118px">18</span><span class="c sym" style="left:175px">?SetCustomFiltFunc@TXBugReport@@YAXP6AHPAU_EXCEPTION_POINTERS@@@Z@Z</span><span class="c dec" style="left:735px">void __cdecl TXBugReport::SetCustomFiltFunc(int (__cdecl*)(struct _EXCEPTION_POINTERS *))</span></div>
<div class="row" style="top:198px"><span class="c addr" style="left:4px">6AE535D0</span><span class="c cj" style="left:68px">导出</span><span class="c" style="left:118px">19</span><span class="c sym" style="left:175px">?SetExtInfo@TXBugReport@@YAHKPB_W@Z</span><span class="c dec" style="left:735px">int __cdecl TXBugReport::SetExtInfo(unsigned long,wchar_t const *)</span></div>
<div class="row" style="top:209px"><span class="c addr" style="left:4px">6AE537B0</span><span class="c cj" style="left:68px">导出</span><span class="c" style="left:118px">20</span><span class="c sym" style="left:175px">?SetExtRptFilePath@TXBugReport@@YAHPB_W0@Z</span><span class="c dec" style="left:735px">int __cdecl TXBugReport::SetExtRptFilePath(wchar_t const *,wchar_t const *)</span></div>
<div class="row" style="top:220px"><span class="c addr" style="left:4px">6AE53A10</span><span class="c cj" style="left:68px">导出</span><span class="c" style="left:118px">21</span><span class="c sym" style="left:175px">?SetLogFileMd5Dir@TXBugReport@@YAHPB_W00@Z</span><span class="c dec" style="left:735px">int __cdecl TXBugReport::SetLogFileMd5Dir(wchar_t const *)</span></div>
<div class="row" style="top:231px"><span class="c addr" style="left:4px">6AE54330</span><span class="c cj" style="left:68px">导出</span><span class="c" style="left:118px">22</span><span class="c sym" style="left:175px">?UninitBugReport@TXBugReport@@YAXXZ</span><span class="c dec" style="left:735px">void __cdecl TXBugReport::UninitBugReport(void)</span></div>
<div class="row" style="top:242px"><span class="c addr" style="left:4px">6AE55020</span><span class="c cj" style="left:68px">导出</span><span class="c" style="left:118px">23</span><span class="c sym" style="left:175px">?ValidateBugReport@TXBugReport@@YAXXZ</span><span class="c dec" style="left:735px">void __cdecl TXBugReport::ValidateBugReport(void)</span></div>
<div class="row" style="top:253px"><span class="c addr" style="left:4px">6B9225A0</span><span class="c cj" style="left:68px">导出</span><span class="c" style="left:118px">24</span><span class="c sym" style="left:175px">?pfPostBugReport@TXBugReport@@3P6AXXZA</span><span class="c dec" style="left:735px">void (__cdecl* TXBugReport::pfPostBugReport)(void)</span></div>
<div class="row" style="top:264px"><span class="c addr" style="left:4px">6B92259C</span><span class="c cj" style="left:68px">导出</span><span class="c" style="left:118px">25</span><span class="c sym" style="left:175px">?pfPreBugReport@TXBugReport@@3P6AXXZA</span><span class="c dec" style="left:735px">void (__cdecl* TXBugReport::pfPreBugReport)(void)</span></div>
<div class="row" style="top:275px"><span class="c addr" style="left:4px">6B062F90</span><span class="c cj" style="left:68px">导出</span><span class="c" style="left:118px">26</span><span class="c sym" style="left:175px">SignWith3Des</span><span class="c dec" style="left:735px"></span></div>
<div class="row" style="top:286px"><span class="c addr" style="left:4px">6AD224F0</span><span class="c cj" style="left:68px">导出</span><span class="c" style="left:118px">27</span><span class="c sym" style="left:175px">StartWachat</span><span class="c dec" style="left:735px"></span></div>
<div class="row" style="top:297px"><span class="c addr" style="left:4px">6AA3F240</span><span class="c cj" style="left:68px">导出</span><span class="c" style="left:118px">28</span><span class="c sym" style="left:175px">_TlsGetData@12</span><span class="c dec" style="left:735px"></span></div>
</div>
<div id="logtext">
<div class="logl" style="top:-7px">[DIA] Skipping non-existent PDB: C:\Windows\SysWOW64\resourcepolicyclient.pdb</div>
<div class="logl" style="top:7px">No symbols loaded for: resourcepolicyclient.dll</div>
<div class="logl" style="top:22px">[DIA] Skipping non-existent PDB: D:\<span class="lcj">工具</span>\<span class="lcj">小黑</span>\<span class="lcj">逆向</span>\x64dbg_2019_07_02\release\x32\symbols\dbghelp.pdb\99A1A8F3877B4CA5BEEADFB737F52EB61\dbghelp.pdb</div>
<div class="logl" style="top:37px">No symbols loaded for: dbghelp.dll</div>
<div class="logl" style="top:51px">[DIA] Skipping non-existent PDB: D:\Program Files (x86)\Tencent\WeChat\dbghelp.pdb</div>
<div class="logl" style="top:65px">No symbols loaded for: dbghelp.dll</div>
<div class="logl" style="top:79px">[DIA] Skipping non-existent PDB: D:\Program Files (x86)\Tencent\WeChat\dbghelp.pdb</div>
<div class="logl" style="top:93px">No symbols loaded for: dbghelp.dll</div>
</div>
</div>
</body></html>
